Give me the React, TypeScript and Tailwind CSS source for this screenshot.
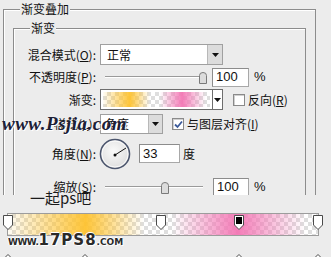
import React from 'react';

const GRAD =
  'bg-[linear-gradient(to_right,rgba(254,196,48,0.05)_0%,rgba(254,194,46,0.95)_25%,rgba(254,196,48,0)_44%,rgba(243,120,182,0)_53%,rgba(243,118,180,0.95)_74%,rgba(243,120,182,0)_96%)]';
const CHECKER =
  'bg-[conic-gradient(#dedede_25%,#fff_0_50%,#dedede_0_75%,#fff_0)] bg-[length:8px_8px]';

const Arrow = () => (
  <svg width="7" height="4" viewBox="0 0 7 4">
    <path d="M0 0 H7 L3.5 4 Z" fill="#111" />
  </svg>
);

const Checkbox = ({ checked }: { checked?: boolean }) => (
  <div className="w-[12px] h-[12px] border border-[#8a8a8a] bg-white shrink-0 flex items-center justify-center shadow-[inset_1px_1px_0_#d0d0d0]">
    {checked && (
      <svg width="9" height="9" viewBox="0 0 9 9">
        <path d="M1 4.5 L3.5 7 L8 1.5" stroke="#3b5a9a" strokeWidth="1.8" fill="none" />
      </svg>
    )}
  </div>
);

const Slider = ({ at }: { at: number }) => (
  <div className="relative w-[108px] h-[18px] shrink-0">
    <div className="absolute left-[5px] right-[5px] top-[8px] h-[2px] border-t border-[#9a9a9a] border-b border-b-white" />
    <svg className="absolute top-[4px]" style={{ left: at }} width="8" height="12" viewBox="0 0 8 12">
      <path d="M0.5 11.5 V3.5 Q0.5 0.5 4 0.5 Q7.5 0.5 7.5 3.5 V11.5 Z" fill="#dcdcdc" stroke="#7a7a7a" />
    </svg>
  </div>
);

const NumBox = ({ value, w }: { value: string; w: string }) => (
  <div className={`${w} h-[19px] bg-white border border-[#a8a8a8] border-t-[#8c8c8c] border-l-[#8c8c8c] flex items-center pl-[3px] text-[13px] font-['Liberation_Sans',sans-serif] text-[#111] shrink-0`}>
    {value}
  </div>
);

const Label = ({ children }: { children: React.ReactNode }) => (
  <div className="w-[83px] text-right text-[12px] leading-[14px] text-[#111] shrink-0 pr-[1px]">{children}</div>
);

const TopStop = ({ x, dark }: { x: number; dark?: boolean }) => (
  <svg className="absolute top-[2px]" style={{ left: x - 5 }} width="10" height="15" viewBox="0 0 10 15">
    <path d="M0.5 0.5 H9.5 V10 L5 14.5 L0.5 10 Z" fill="#fff" stroke="#4a4a4a" />
    {dark && <rect x="2" y="2" width="6" height="7" fill="#000" />}
  </svg>
);

const BottomStop = ({ x, color }: { x: number; color: string }) => (
  <svg className="absolute top-[41px]" style={{ left: x - 5 }} width="10" height="15" viewBox="0 0 10 15">
    <path d="M5 0.5 L9.5 5 V14.5 H0.5 V5 Z" fill="#fff" stroke="#4a4a4a" />
    <rect x="2" y="7" width="6" height="6" fill={color} />
  </svg>
);

export default function App() {
  return (
    <div className="relative w-[331px] h-[257px] bg-[#ececec] overflow-hidden font-['Noto_Sans_CJK_SC','Liberation_Sans',sans-serif] text-[#111]">
      {/* --- 渐变叠加 --- */}
      <div className="h-[195px] overflow-hidden pl-[3px] pt-[9px]">
        <div className="relative w-[313px] h-[200px] border-l border-t border-r border-[#8c8c8c] shadow-[inset_1px_1px_0_#fff] pl-[9px] pt-[18px]">
          <div className="absolute left-[16px] top-[-8px] px-[1px] bg-[#ececec] text-[12px] leading-[14px]">渐变叠加</div>

          <div className="relative w-[293px] h-[190px] border-l border-t border-r border-[#8c8c8c] shadow-[inset_1px_1px_0_#fff]">
            <div className="absolute left-[16px] top-[-8px] px-[1px] bg-[#ececec] text-[12px] leading-[14px]">渐变</div>

            {/* 混合模式 */}
            <div className="flex items-center h-[21px] mt-[15px]">
              <Label>混合模式(<span className="underline">O</span>):</Label>
              <div className="ml-[3px] w-[123px] h-[21px] bg-white border border-[#a0a0a0] flex shrink-0">
                <div className="flex-1 pl-[6px] text-[12px] leading-[19px]">正常</div>
                <div className="w-[15px] h-full bg-[#dcdcdc] border-l border-[#b8b8b8] flex items-center justify-center">
                  <Arrow />
                </div>
              </div>
            </div>

            {/* 不透明度 */}
            <div className="flex items-center h-[18px] mt-[3px]">
              <Label>不透明度(<span className="underline">P</span>):</Label>
              <div className="ml-[3px]"><Slider at={99} /></div>
              <div className="ml-[4px]"><NumBox value="100" w="w-[37px]" /></div>
              <div className="ml-[5px] text-[13px] font-['Liberation_Sans',sans-serif]">%</div>
            </div>

            {/* 渐变 */}
            <div className="flex items-center h-[21px] mt-[3px]">
              <Label>渐变:</Label>
              <div className="ml-[3px] w-[123px] h-[21px] bg-white border border-[#6e6e6e] flex shrink-0">
                <div className={`flex-1 min-w-0 m-[2px] ${CHECKER}`}>
                  <div className={`h-full ${GRAD}`} />
                </div>
                <div className="w-[10px] border-l border-[#6e6e6e] flex items-center justify-center">
                  <Arrow />
                </div>
              </div>
              <div className="ml-[10px]"><Checkbox /></div>
              <div className="ml-[3px] text-[12px] leading-[14px]">反向(<span className="underline">R</span>)</div>
            </div>

            {/* 样式 */}
            <div className="flex items-center h-[20px] mt-[4px]">
              <Label>样式(<span className="underline">L</span>):</Label>
              <div className="ml-[3px] w-[63px] h-[20px] bg-white border border-[#a0a0a0] flex shrink-0">
                <div className="flex-1 pl-[4px] text-[12px] leading-[18px]">角度</div>
                <div className="w-[14px] h-full bg-[#dcdcdc] border-l border-[#b8b8b8] flex items-center justify-center">
                  <Arrow />
                </div>
              </div>
              <div className="ml-[9px]"><Checkbox checked /></div>
              <div className="ml-[3px] text-[12px] leading-[14px]">与图层对齐(<span className="underline">I</span>)</div>
            </div>

            {/* 角度 */}
            <div className="flex items-center h-[31px] mt-[4px]">
              <Label>角度(<span className="underline">N</span>):</Label>
              <svg className="ml-[2px] shrink-0" width="32" height="32" viewBox="0 0 32 32">
                <defs>
                  <radialGradient id="dial" cx="0.45" cy="0.4" r="0.6">
                    <stop offset="0" stopColor="#fafafa" />
                    <stop offset="1" stopColor="#dedede" />
                  </radialGradient>
                </defs>
                <circle cx="16" cy="16" r="14.5" fill="url(#dial)" stroke="#4c566e" strokeWidth="1.6" />
                <circle cx="16" cy="16" r="13" fill="none" stroke="#ffffff" strokeWidth="0.8" />
                <line x1="16" y1="17" x2="27" y2="10" stroke="#111" strokeWidth="1" />
                <circle cx="16" cy="17" r="1.5" fill="#111" />
              </svg>
              <div className="ml-[8px]"><NumBox value="33" w="w-[41px]" /></div>
              <div className="ml-[3px] text-[12px] leading-[14px]">度</div>
            </div>

            {/* 缩放 */}
            <div className="flex items-center h-[18px] mt-[9px]">
              <Label>缩放(<span className="underline">S</span>):</Label>
              <div className="ml-[3px]"><Slider at={61} /></div>
              <div className="ml-[5px]"><NumBox value="100" w="w-[36px]" /></div>
              <div className="ml-[5px] text-[13px] font-['Liberation_Sans',sans-serif]">%</div>
            </div>
          </div>
        </div>
      </div>

      {/* --- 渐变编辑条 --- */}
      <div className="relative h-[62px]">
        <TopStop x={8} />
        <TopStop x={161} />
        <TopStop x={239} dark />
        <TopStop x={318} />

        <div className={`ml-[7px] mt-[18px] w-[312px] h-[23px] border border-[#9c9c9c] ${CHECKER}`}>
          <div className={`w-full h-full ${GRAD}`} />
        </div>

        <BottomStop x={8} color="#ffffff" />
        <BottomStop x={85} color="#f8c24a" />
        <BottomStop x={239} color="#ec7fb1" />
        <BottomStop x={318} color="#ffffff" />

        <div className="absolute left-[8px] top-[20px] flex items-baseline font-['DejaVu_Sans',sans-serif] font-bold text-[#2a2a2a] [text-shadow:1px_1px_0_#fff,-1px_0_0_#fff,0_-1px_0_#fff]">
          <span className="text-[9px] tracking-[-0.5px]">WWW.</span>
          <span className="text-[15px] tracking-[1px] leading-[15px]">17PS8</span>
          <span className="text-[9px]">.COM</span>
        </div>
      </div>

      {/* watermarks */}
      <div className="absolute left-[30px] top-[189px] text-[15px] leading-[18px] text-[#1a1a1a]">一起ps吧</div>
      <div className="absolute left-[2px] top-[113px] text-[19px] leading-[22px] italic font-bold font-['Liberation_Serif',serif] text-[#1c2036] tracking-[0.5px] [text-shadow:1px_1px_0_#fff]">
        www.Psjia.com
      </div>
    </div>
  );
}
